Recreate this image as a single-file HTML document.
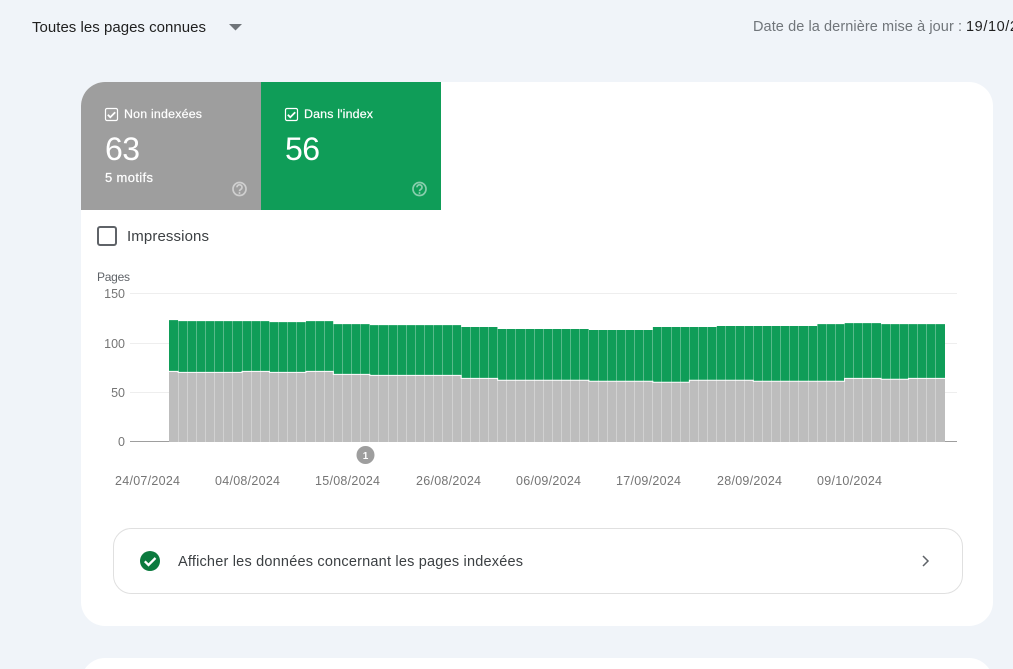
<!DOCTYPE html>
<html lang="fr">
<head>
<meta charset="utf-8">
<title>Indexation des pages</title>
<style>
html,body{margin:0;padding:0;width:1013px;height:669px;overflow:hidden;background:#f0f4f9}
svg{display:block;position:absolute;left:0;top:0}
text{font-family:"Liberation Sans",sans-serif}
</style>
</head>
<body>
<svg width="1013" height="669" viewBox="0 0 1013 669" xmlns="http://www.w3.org/2000/svg">
<rect width="1013" height="669" fill="#f0f4f9"/>

<text x="32" y="32" font-size="15" fill="#1f1f1f" textLength="174" lengthAdjust="spacing">Toutes les pages connues</text>
<path d="M229 24h13l-6.500 6.500z" fill="#70757a"/>
<text x="753" y="31" font-size="14.500" fill="#70757a" textLength="209" lengthAdjust="spacing">Date de la dernière mise à jour :</text>
<text x="966" y="31" font-size="14.500" fill="#1f1f1f" textLength="52" lengthAdjust="spacing">19/10/2</text>

<rect x="81" y="82" width="912" height="544" rx="24" fill="#fff"/>
<path d="M81 669V682a24 24 0 0 1 24-24H969a24 24 0 0 1 24 24V669z" fill="#fff"/>

<path d="M261 82H105a24 24 0 0 0-24 24V210H261z" fill="#9e9e9e"/>
<rect x="261" y="82" width="180" height="128" fill="#0f9d58"/>

<rect x="105.500" y="108.500" width="12" height="12" rx="1.500" fill="none" stroke="#fff" stroke-width="1.200"/>
<path d="M107.800 114.700l2.500 2.500 4.900-4.900" fill="none" stroke="#fff" stroke-width="1.800"/>
<text x="124" y="118" font-size="12.400" fill="#fff" stroke="#fff" stroke-width=".2" textLength="78" lengthAdjust="spacing">Non indexées</text>
<text x="105" y="160" font-size="32" fill="#fff" textLength="35" lengthAdjust="spacing">63</text>
<text x="105" y="182" font-size="13" fill="#fff" stroke="#fff" stroke-width=".2" textLength="48" lengthAdjust="spacing">5 motifs</text>
<g fill="none" stroke="#fff" stroke-opacity=".5" stroke-width="1.700">
<circle cx="239.500" cy="189" r="6.500"/>
<path d="M237 187.300a2.500 2.500 0 1 1 3.900 2c-.9.600-1.400 1-1.400 2"/>
</g>
<circle cx="239.500" cy="193" r="1" fill="#fff" fill-opacity=".5"/>

<rect x="285.500" y="108.500" width="12" height="12" rx="1.500" fill="none" stroke="#fff" stroke-width="1.200"/>
<path d="M287.800 114.700l2.500 2.500 4.900-4.900" fill="none" stroke="#fff" stroke-width="1.800"/>
<text x="304" y="118" font-size="12.400" fill="#fff" stroke="#fff" stroke-width=".2" textLength="69" lengthAdjust="spacing">Dans l'index</text>
<text x="285" y="160" font-size="32" fill="#fff" textLength="35" lengthAdjust="spacing">56</text>
<g fill="none" stroke="#fff" stroke-opacity=".5" stroke-width="1.700">
<circle cx="419.500" cy="189" r="6.500"/>
<path d="M417 187.300a2.500 2.500 0 1 1 3.900 2c-.9.600-1.400 1-1.400 2"/>
</g>
<circle cx="419.500" cy="193" r="1" fill="#fff" fill-opacity=".5"/>

<rect x="98" y="227" width="18" height="18" rx="2" fill="none" stroke="#5f6368" stroke-width="2"/>
<text x="127" y="241" font-size="15" fill="#3c4043" textLength="82" lengthAdjust="spacing">Impressions</text>

<text x="97" y="281" font-size="12" fill="#5f6368" textLength="33" lengthAdjust="spacing">Pages</text>
<g font-size="12.500" fill="#757575" text-anchor="end">
<text x="125" y="298">150</text>
<text x="125" y="348">100</text>
<text x="125" y="397">50</text>
<text x="125" y="446">0</text>
</g>
<g fill="#eeeeee">
<rect x="130" y="293" width="827" height="1"/>
<rect x="130" y="343" width="827" height="1"/>
<rect x="130" y="392" width="827" height="1"/>
</g>

<path fill="#0f9d58" d="M169 320.100H178.130V321.100H269.420V322.100H305.940V321.100H333.320V324.100H369.840V325.100H461.130V327H497.640V329H588.930V330H652.840V327H716.740V326H817.160V324.100H844.550V323.100H881.060V324.100H945V378.400H908.450V379.300H881.060V378.400H844.550V381.300H753.260V380.300H689.350V382.300H652.840V381.300H588.930V380.300H497.640V378.400H461.130V375.400H369.840V374.400H333.320V371.400H305.940V372.400H269.420V371.400H242.030V372.400H178.130V371.400H169z"/>
<path fill="#bdbdbd" d="M169 371.400H178.130V372.400H242.030V371.400H269.420V372.400H305.940V371.400H333.320V374.400H369.840V375.400H461.130V378.400H497.640V380.300H588.930V381.300H652.840V382.300H689.350V380.300H753.260V381.300H844.550V378.400H881.060V379.300H908.450V378.400H945V442H169z"/>
<path fill="none" stroke="#fff" stroke-width="1" stroke-opacity=".3" d="M178.500 318V442M187.500 318V442M196.500 318V442M205.500 318V442M214.500 318V442M223.500 318V442M232.500 318V442M242.500 318V442M251.500 318V442M260.500 318V442M269.500 318V442M278.500 318V442M287.500 318V442M296.500 318V442M305.500 318V442M315.500 318V442M324.500 318V442M333.500 318V442M342.500 318V442M351.500 318V442M360.500 318V442M369.500 318V442M378.500 318V442M388.500 318V442M397.500 318V442M406.500 318V442M415.500 318V442M424.500 318V442M433.500 318V442M442.500 318V442M452.500 318V442M461.500 318V442M470.500 318V442M479.500 318V442M488.500 318V442M497.500 318V442M506.500 318V442M515.500 318V442M525.500 318V442M534.500 318V442M543.500 318V442M552.500 318V442M561.500 318V442M570.500 318V442M579.500 318V442M588.500 318V442M598.500 318V442M607.500 318V442M616.500 318V442M625.500 318V442M634.500 318V442M643.500 318V442M652.500 318V442M661.500 318V442M671.500 318V442M680.500 318V442M689.500 318V442M698.500 318V442M707.500 318V442M716.500 318V442M725.500 318V442M735.500 318V442M744.500 318V442M753.500 318V442M762.500 318V442M771.500 318V442M780.500 318V442M789.500 318V442M798.500 318V442M808.500 318V442M817.500 318V442M826.500 318V442M835.500 318V442M844.500 318V442M853.500 318V442M862.500 318V442M871.500 318V442M881.500 318V442M890.500 318V442M899.500 318V442M908.500 318V442M917.500 318V442M926.500 318V442M935.500 318V442"/>
<path fill="none" stroke="#fff" stroke-width="1" d="M169 371.400H178.130V372.400H242.030V371.400H269.420V372.400H305.940V371.400H333.320V374.400H369.840V375.400H461.130V378.400H497.640V380.300H588.930V381.300H652.840V382.300H689.350V380.300H753.260V381.300H844.550V378.400H881.060V379.300H908.450V378.400H945"/>
<rect x="130" y="441" width="39" height="1" fill="#9e9e9e"/>
<rect x="945" y="441" width="12" height="1" fill="#9e9e9e"/>

<circle cx="365.500" cy="455" r="9" fill="#9e9e9e"/>
<text x="365.500" y="459" font-size="10" font-weight="bold" fill="#fff" text-anchor="middle">1</text>

<g font-size="12.500" fill="#757575">
<text x="115" y="485" textLength="65" lengthAdjust="spacing">24/07/2024</text>
<text x="215" y="485" textLength="65" lengthAdjust="spacing">04/08/2024</text>
<text x="315" y="485" textLength="65" lengthAdjust="spacing">15/08/2024</text>
<text x="416" y="485" textLength="65" lengthAdjust="spacing">26/08/2024</text>
<text x="516" y="485" textLength="65" lengthAdjust="spacing">06/09/2024</text>
<text x="616" y="485" textLength="65" lengthAdjust="spacing">17/09/2024</text>
<text x="717" y="485" textLength="65" lengthAdjust="spacing">28/09/2024</text>
<text x="817" y="485" textLength="65" lengthAdjust="spacing">09/10/2024</text>
</g>

<rect x="113.500" y="528.500" width="849" height="65" rx="18" fill="#fff" stroke="#e0e0e0"/>
<circle cx="150" cy="561" r="10" fill="#0b7a3e"/>
<path d="M144.800 561.300l3.700 3.700 7-7" fill="none" stroke="#fff" stroke-width="2.300"/>
<text x="178" y="566" font-size="14.500" fill="#3c4043" textLength="345" lengthAdjust="spacing">Afficher les données concernant les pages indexées</text>
<path d="M923 556l5 5-5 5" fill="none" stroke="#5f6368" stroke-width="1.500"/>
</svg>
</body>
</html>
